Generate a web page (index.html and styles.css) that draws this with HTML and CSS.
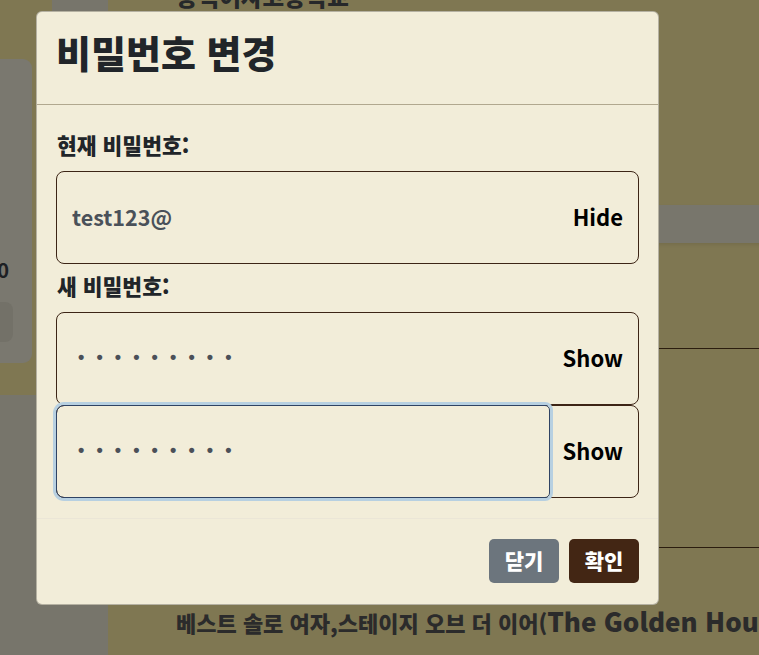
FILE: index.html
```html
<!DOCTYPE html>
<html lang="ko">
<head>
<meta charset="utf-8">
<title>비밀번호 변경</title>
<link rel="stylesheet" href="styles.css">
</head>
<body>
<div class="page">
  <aside class="side">
    <div class="side-top"><div class="side-strip"></div></div>
    <div class="side-card">
      <span class="side-num">0</span>
      <div class="side-btn"></div>
    </div>
    <div class="side-gap"></div>
    <div class="side-rest"></div>
  </aside>
  <main class="content">
    <h2 class="school">동덕여자고등학교</h2>
    <div class="band"></div>
    <div class="rule rule-a"></div>
    <div class="rule rule-b"></div>
    <p class="award">베스트 솔로 여자,스테이지 오브 더 이어(<span class="award-en">The Golden Hour</span>)</p>
  </main>
</div>

<div class="modal">
  <div class="modal-header">
    <h1 class="modal-title">비밀번호 변경</h1>
  </div>
  <div class="modal-body">
    <label class="field-label">현재 비밀번호:</label>
    <div class="group group-first">
      <input class="field" type="text" value="test123@">
      <button class="toggle">Hide</button>
    </div>
    <label class="field-label">새 비밀번호:</label>
    <div class="group">
      <input class="field field-pw" type="password" value="abcdefghi">
      <button class="toggle">Show</button>
    </div>
    <div class="group group-focus">
      <input class="field field-pw" type="password" value="abcdefghi">
      <button class="toggle">Show</button>
    </div>
  </div>
  <div class="modal-footer">
    <button class="btn btn-close">닫기</button>
    <button class="btn btn-ok">확인</button>
  </div>
</div>
</body>
</html>
```

FILE: styles.css
```css
* { box-sizing: border-box; }

html, body {
  margin: 0;
  padding: 0;
  width: 759px;
  height: 655px;
  overflow: hidden;
}

body {
  background: #7f7752;
  font-family: "Noto Sans CJK KR", "Noto Sans", sans-serif;
  position: relative;
}

.page {
  display: flex;
  height: 655px;
}

/* left column of the dimmed page */
.side {
  width: 108px;
  flex: none;
  display: flex;
  flex-direction: column;
}
.side-top { height: 59px; }
.side-strip {
  margin-left: 52px;
  height: 59px;
  background: #77756b;
}
.side-card {
  width: 32px;
  height: 304px;
  background: #7a786f;
  border-radius: 0 9px 9px 0;
  display: flex;
  flex-direction: column;
  align-items: flex-end;
  padding-top: 199px;
  padding-right: 25px;
}
.side-num {
  font-size: 20px;
  font-weight: 700;
  line-height: 24px;
  color: #1d2024;
  margin-right: -2px;
}
.side-btn {
  width: 20px;
  height: 40px;
  margin-top: 20px;
  align-self: flex-start;
  margin-left: -7px;
  background: #737168;
  border-radius: 8px;
}
.side-gap { height: 32px; }
.side-rest { flex: 1; background: #77756b; }

/* main area of the dimmed page */
.content {
  flex: 1;
  display: flex;
  flex-direction: column;
}
.school {
  margin: -19px 0 0 68px;
  font-size: 23.5px;
  line-height: 30px;
  font-weight: 900;
  color: #26282a;
}
.band {
  margin-top: 194px;
  height: 38px;
  background: #78766c;
  box-shadow: 0 2px 3px rgba(0,0,0,.08);
}
.rule {
  height: 1px;
  background: #2b1d0f;
}
.rule-a { margin-top: 105px; }
.rule-b { margin-top: 198px; }
.award {
  margin: 59px 0 0 68px;
  font-size: 22px;
  line-height: 30px;
  font-weight: 900;
  color: #2b2b2b;
  white-space: nowrap;
}
.award-en { font-size: 26px; line-height: 20px; }

/* modal */
.modal {
  position: absolute;
  top: 11px;
  left: 36px;
  width: 623px;
  background: #f2edd9;
  border: 1px solid rgba(0,0,0,.25);
  border-radius: 6px;
  display: flex;
  flex-direction: column;
}
.modal-header {
  height: 93px;
  border-bottom: 1px solid #b1a88f;
  display: flex;
  align-items: center;
  padding: 0 19px 12px 19px;
}
.modal-title {
  margin: 0;
  font-size: 38px;
  line-height: 1.2;
  font-weight: 900;
  color: #212529;
}
.modal-body {
  padding: 25px 19px 20px;
  display: flex;
  flex-direction: column;
}
.field-label {
  display: block;
  font-size: 21.5px;
  line-height: 30px;
  font-weight: 900;
  color: #212529;
  margin: 0 0 11px 1px;
}
.group {
  display: flex;
  height: 93px;
  border: 1px solid #3d2516;
  border-radius: 8px;
}
.group-first { margin-bottom: 7px; }
.field {
  flex: 1;
  min-width: 0;
  background: transparent;
  border: 1px solid transparent;
  border-radius: 8px 0 0 8px;
  margin: -1px 0 -1px -1px;
  padding: 0 15px 3px;
  font-family: "Noto Sans CJK KR", "Noto Sans", sans-serif;
  font-size: 21.5px;
  font-weight: 700;
  color: #4a5159;
  outline: none;
}
.field-pw {
  font-family: "Liberation Sans", sans-serif;
  font-size: 18px;
  letter-spacing: 12.1px;
  padding-left: 21px;
  color: #4b5058;
}
.group-focus .field {
  border-color: #2f4363;
  border-radius: 8px 5px 5px 8px;
  box-shadow: 0 0 0 3px #b7d0e1;
  position: relative;
}
.toggle {
  background: none;
  border: none;
  padding: 0 15px 4px 13px;
  font-family: "Noto Sans CJK KR", "Noto Sans", sans-serif;
  font-size: 22px;
  font-weight: 700;
  color: #000;
}
.modal-footer {
  border-top: 1px solid #ebe6d7;
  padding: 20px 19px 21px;
  display: flex;
  justify-content: flex-end;
  gap: 10px;
}
.btn {
  height: 44px;
  width: 70px;
  border: none;
  border-radius: 5px;
  font-family: "Noto Sans CJK KR", "Noto Sans", sans-serif;
  font-size: 21px;
  font-weight: 900;
  color: #fff;
  padding: 0 0 2px;
}
.btn-close { background: #6c757d; }
.btn-ok { background: #432614; }
```
